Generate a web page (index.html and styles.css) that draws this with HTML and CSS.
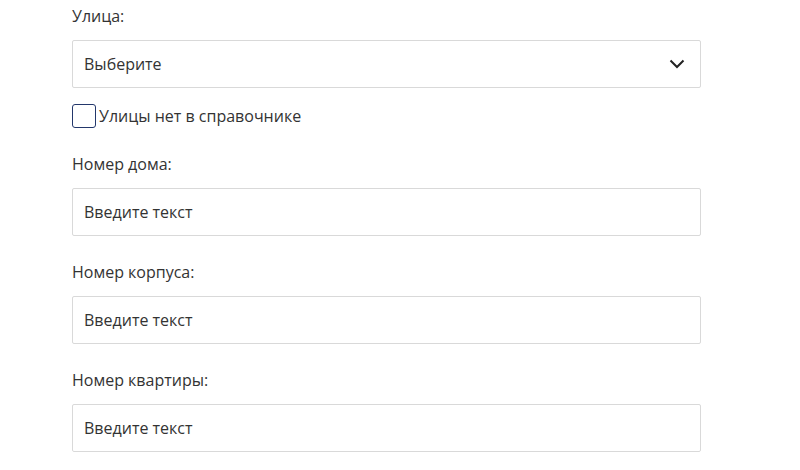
FILE: index.html
```html
<!DOCTYPE html>
<html lang="ru">
<head>
<meta charset="utf-8">
<link rel="stylesheet" href="styles.css">
</head>
<body>
<form class="form">
  <div class="field">
    <label class="label">Улица:</label>
    <div class="select">
      <span class="value">Выберите</span>
      <svg class="chevron" width="16" height="10" viewBox="0 0 16 10"><path d="M1.5 1.5 L8 8 L14.5 1.5" fill="none" stroke="#222" stroke-width="2"/></svg>
    </div>
    <label class="check">
      <span class="box"></span>
      <span class="check-text">Улицы нет в справочнике</span>
    </label>
  </div>
  <div class="field">
    <label class="label">Номер дома:</label>
    <div class="input">Введите текст</div>
  </div>
  <div class="field">
    <label class="label">Номер корпуса:</label>
    <div class="input">Введите текст</div>
  </div>
  <div class="field">
    <label class="label">Номер квартиры:</label>
    <div class="input">Введите текст</div>
  </div>
</form>
</body>
</html>
```

FILE: styles.css
```css
html, body {
  margin: 0;
  padding: 0;
  background: #fff;
}
body {
  font-family: "Open Sans", "Liberation Sans", sans-serif;
  font-size: 16px;
  color: #333;
}
.form {
  width: 629px;
  padding: 4px 0 0 72px;
  display: flex;
  flex-direction: column;
  gap: 24px;
}
.field {
  display: flex;
  flex-direction: column;
}
.label {
  line-height: 24px;
  margin-bottom: 12px;
}
.select, .input {
  box-sizing: border-box;
  height: 48px;
  border: 1px solid #d9d9d9;
  border-radius: 2px;
  padding: 0 15px 0 11px;
  display: flex;
  align-items: center;
  line-height: 24px;
  color: #333;
}
.select {
  justify-content: space-between;
}
.chevron {
  display: block;
}
.check {
  display: flex;
  align-items: center;
  margin-top: 16px;
  height: 24px;
  gap: 3px;
}
.box {
  box-sizing: border-box;
  width: 24px;
  height: 24px;
  border: 1.5px solid #23376b;
  border-radius: 3px;
}
.check-text {
  line-height: 24px;
}
```
